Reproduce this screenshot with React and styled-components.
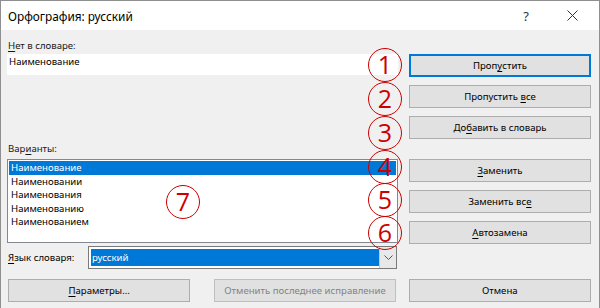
import React from 'react';
import styled, { createGlobalStyle } from 'styled-components';

const GlobalStyle = createGlobalStyle`
  html, body {
    margin: 0;
    padding: 0;
    background: #ffffff;
  }
  body {
    font-family: "Noto Sans", "Open Sans", Arial, sans-serif;
    font-size: 9.6px;
    color: #000000;
  }
`;

const Dialog = styled.div`
  position: relative;
  width: 600px;
  height: 308px;
  box-sizing: border-box;
  border: 1px solid #8f8f8f;
  border-bottom: 0;
  background: #f0f0f0;
  display: flex;
  flex-direction: column;
  overflow: hidden;
`;

const TitleBar = styled.div`
  height: 29px;
  background: #ffffff;
  display: flex;
  align-items: center;
  padding-left: 7px;
  padding-right: 4px;
  font-size: 11.8px;
  color: #000;
`;

const TitleText = styled.div`
  flex: 1;
`;

const TitleButton = styled.div`
  width: 46px;
  height: 29px;
  display: flex;
  align-items: center;
  justify-content: center;
  color: #333;
  font-size: 13px;
`;

const Body = styled.div`
  display: flex;
  padding: 0 8px 0 6px;
  gap: 11px;
  height: 249px;
`;

const LeftColumn = styled.div`
  width: 391px;
  display: flex;
  flex-direction: column;
`;

const RightColumn = styled.div`
  width: 182px;
  display: flex;
  flex-direction: column;
  padding-top: 24px;
  gap: 8px;
`;

const Label = styled.div`
  line-height: 14px;
  height: 14px;
  margin-top: ${(p) => p.$top || 0}px;
  padding-left: 1px;
  color: #1a1a1a;
`;

const U = styled.span`
  text-decoration: underline;
  text-underline-offset: 2px;
`;

const Field = styled.div`
  margin-top: 1px;
  height: 21px;
  background: #ffffff;
  padding: 1px 2px;
  box-sizing: border-box;
  line-height: 14px;
`;

const List = styled.div`
  margin-top: 3px;
  height: 84px;
  box-sizing: border-box;
  border: 1px solid #828790;
  background: #ffffff;
  padding: 1px;
`;

const ListItem = styled.div`
  height: 13.6px;
  line-height: 13.6px;
  padding-left: 2px;
  background: ${(p) => (p.$selected ? '#0078d7' : 'transparent')};
  color: ${(p) => (p.$selected ? '#ffffff' : '#000000')};
  white-space: nowrap;
`;

const ComboRow = styled.div`
  margin-top: 3px;
  display: flex;
  align-items: center;
  height: 23px;
`;

const ComboLabel = styled.div`
  width: 80px;
  padding-left: 1px;
  white-space: nowrap;
`;

const Combo = styled.div`
  flex: 1;
  height: 23px;
  box-sizing: border-box;
  border: 1px solid #7a7a7a;
  background: #ffffff;
  display: flex;
  padding: 2px 0 2px 2px;
  margin-right: 1px;
`;

const ComboValue = styled.div`
  flex: 1;
  background: #0078d7;
  color: #ffffff;
  line-height: 17px;
  padding-left: 1px;
`;

const ComboArrow = styled.div`
  width: 16px;
  margin: -2px 0;
  border-left: 1px solid #c8c8c8;
  background: #e8e8e8;
  display: flex;
  align-items: center;
  justify-content: center;
`;

const Button = styled.div`
  height: 23px;
  box-sizing: border-box;
  border: 1px solid;
  box-shadow: ${(p) => (p.$default ? 'inset 0 0 0 1px #0078d7' : 'none')};
  background: #e1e1e1;
  color: ${(p) => (p.$disabled ? '#838383' : '#000000')};
  border-color: ${(p) => (p.$disabled ? '#bfbfbf' : p.$default ? '#0078d7' : '#adadad')};
  display: flex;
  align-items: center;
  justify-content: center;
  white-space: nowrap;
  width: ${(p) => p.$width || 'auto'};
  margin-top: ${(p) => p.$top || 0}px;
`;

const Footer = styled.div`
  display: flex;
  padding: 0 8px 0 7px;
  gap: 24px;
  & > div:last-child {
    margin-left: -11px;
  }
`;

const Badge = styled.div`
  position: absolute;
  left: ${(p) => p.$x - 17}px;
  top: ${(p) => p.$y - 17}px;
  width: 34px;
  height: 34px;
  box-sizing: border-box;
  border: 1.6px solid #cc0000;
  border-radius: 50%;
  color: #cc0000;
  font-family: "Open Sans", "Noto Sans", sans-serif;
  font-size: 25px;
  font-weight: 400;
  line-height: 31px;
  text-align: center;
`;

const variants = ['Наименование', 'Наименовании', 'Наименования', 'Наименованию', 'Наименованием'];

const badges = [
  [384, 64],
  [384, 98],
  [384, 132],
  [384, 166],
  [384, 199],
  [384, 232],
  [182, 201],
];

export default function App() {
  return (
    <>
      <GlobalStyle />
      <Dialog>
        <TitleBar>
          <TitleText>Орфография: русский</TitleText>
          <TitleButton>?</TitleButton>
          <TitleButton>
            <svg width="11" height="11" viewBox="0 0 11 11">
              <path d="M0.5 0.5 L10.5 10.5 M10.5 0.5 L0.5 10.5" stroke="#333" strokeWidth="1" />
            </svg>
          </TitleButton>
        </TitleBar>
        <Body>
          <LeftColumn>
            <Label $top={9}>
              <U>Н</U>ет в словаре:
            </Label>
            <Field>Наименование</Field>
            <Label $top={67}>
              Вар<U>и</U>анты:
            </Label>
            <List>
              {variants.map((v, i) => (
                <ListItem key={v} $selected={i === 0}>
                  {v}
                </ListItem>
              ))}
            </List>
            <ComboRow>
              <ComboLabel>
                <U>Я</U>зык словаря:
              </ComboLabel>
              <Combo>
                <ComboValue>русский</ComboValue>
                <ComboArrow>
                  <svg width="9" height="6" viewBox="0 0 9 6">
                    <path d="M0.5 0.5 L4.5 4.5 L8.5 0.5" fill="none" stroke="#555" strokeWidth="1" />
                  </svg>
                </ComboArrow>
              </Combo>
            </ComboRow>
          </LeftColumn>
          <RightColumn>
            <Button $default>
              Проп<U>у</U>стить
            </Button>
            <Button>
              Пропустить&nbsp;<U>в</U>се
            </Button>
            <Button>
              До<U>б</U>авить в словарь
            </Button>
            <Button $top={12}>
              <U>З</U>аменить
            </Button>
            <Button>
              Заменить вс<U>е</U>
            </Button>
            <Button>
              <U>А</U>втозамена
            </Button>
          </RightColumn>
        </Body>
        <Footer>
          <Button $width="183px">
            <U>П</U>араметры...
          </Button>
          <Button $width="182px" $disabled>
            Отменить последнее исправление
          </Button>
          <Button $width="183px">Отмена</Button>
        </Footer>
        {badges.map(([x, y], i) => (
          <Badge key={i} $x={x} $y={y}>
            {i + 1}
          </Badge>
        ))}
      </Dialog>
    </>
  );
}
